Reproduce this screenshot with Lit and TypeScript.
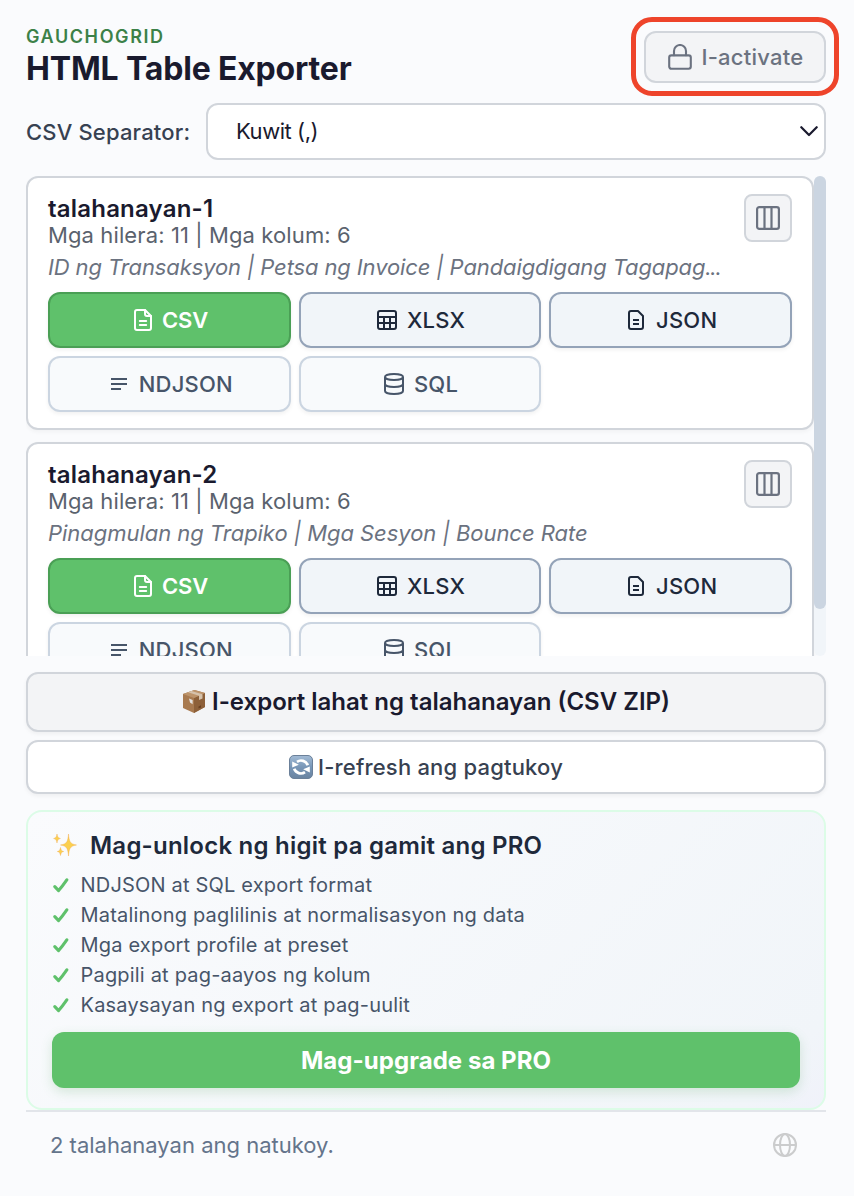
import { LitElement, html, css, nothing, type TemplateResult } from "lit";
import { customElement, property } from "lit/decorators.js";

const icons: Record<string, TemplateResult> = {
  lock: html`<svg width="24" height="26" viewBox="0 0 24 26" fill="none" stroke="currentColor" stroke-width="2.1" stroke-linecap="round" stroke-linejoin="round"><rect x="1.2" y="11.4" width="21.6" height="13.4" rx="2.2"/><path d="M6 11.2V7a6 6 0 0 1 12 0v4.2"/></svg>`,
  chevron: html`<svg width="18" height="11" viewBox="0 0 18 11" fill="none" stroke="currentColor" stroke-width="2.2" stroke-linecap="round" stroke-linejoin="round"><path d="M1.3 1.2 9 9l7.7-7.8"/></svg>`,
  columns: html`<svg width="24" height="24" viewBox="0 0 24 24" fill="none" stroke="currentColor" stroke-width="2.2"><rect x="1.1" y="1.1" width="21.8" height="21.8" rx="2.2"/><path d="M8.5 1v22M15.5 1v22"/></svg>`,
  csv: html`<svg width="18" height="22" viewBox="0 0 18 22" fill="none" stroke="currentColor" stroke-width="2" stroke-linecap="round" stroke-linejoin="round"><path d="M11 1H3a2 2 0 0 0-2 2v16a2 2 0 0 0 2 2h12a2 2 0 0 0 2-2V7z"/><path d="M11 1v4a2 2 0 0 0 2 2h4M5.8 12h6.4M5.8 16h6.4"/></svg>`,
  xlsx: html`<svg width="20" height="20" viewBox="0 0 20 20" fill="none" stroke="currentColor" stroke-width="2"><rect x="1" y="1" width="18" height="18" rx="2"/><path d="M1 7h18M1 13h18M7 7v12M13 7v12"/></svg>`,
  json: html`<svg width="16" height="20" viewBox="0 0 16 20" fill="none" stroke="currentColor" stroke-width="2" stroke-linejoin="round"><path d="M10 1H3a2 2 0 0 0-2 2v14a2 2 0 0 0 2 2h10a2 2 0 0 0 2-2V6z"/><path d="M5 10h6M5 14h6"/></svg>`,
  ndjson: html`<svg width="16" height="12" viewBox="0 0 16 12" fill="none" stroke="currentColor" stroke-width="2"><path d="M0 1h16M0 6h16M0 11h10"/></svg>`,
  sql: html`<svg width="20" height="22" viewBox="0 0 20 22" fill="none" stroke="currentColor" stroke-width="2"><ellipse cx="10" cy="4" rx="9" ry="3"/><path d="M1 4v14c0 1.7 4 3 9 3s9-1.3 9-3V4M1 11c0 1.7 4 3 9 3s9-1.3 9-3"/></svg>`,
  check: html`<svg width="16" height="15" viewBox="0 0 16 15" fill="none" stroke="currentColor" stroke-width="3.1" stroke-linecap="round" stroke-linejoin="round"><path d="M1.8 8.6 5.6 12.6Q9.5 8 13.8 1.8"/></svg>`,
  globe: html`<svg width="24" height="24" viewBox="0 0 24 24" fill="none" stroke="currentColor" stroke-width="2"><circle cx="12" cy="12" r="11"/><ellipse cx="12" cy="12" rx="5" ry="11"/><path d="M1 12h22"/></svg>`,
  box: html`<svg width="24" height="25" viewBox="0 0 24 25"><path d="M1 5 12.500 1 23 4v14L12 24 1 19z" fill="#a87a50"/><path d="M12 9 23 4v14L12 24z" fill="#8d6039"/><path d="M1 5 12.500 1 23 4 12 9z" fill="#bd946b"/><path d="m6 3.300 3.400-1.200L20.500 5.200v4.300L17 11V6.700z" fill="#d6c2ab"/><path d="m7 9.600 3.600 1.300v4.300L8 13.600z" fill="#e4e2df"/><path d="m16.500 17.500 2.500-1.200v2.100l-2.500 1.100z" fill="#6b4122"/></svg>`,
  refresh: html`<svg width="24" height="24" viewBox="0 0 24 24"><defs><linearGradient id="tile" x1="0" y1="0" x2="0" y2="1"><stop offset="0" stop-color="#a3bcd6"/><stop offset=".5" stop-color="#7896b7"/><stop offset="1" stop-color="#6983a0"/></linearGradient></defs><rect x=".5" y=".5" width="23" height="23" rx="4.500" fill="url(#tile)" stroke="#6b8099"/><g fill="none" stroke="#fff" stroke-width="2.700"><path d="M8 6.800A7.200 7.200 0 0 1 18.800 10.200"/><path d="M16 17.200A7.200 7.200 0 0 1 5.200 13.800"/></g><path d="M3.200 12.600V6.400l6.600 3.400zM20.800 11.400v6.200l-6.600-3.400z" fill="#fff"/></svg>`,
  sparkles: html`<svg width="25" height="24" viewBox="0 0 25 24" fill="#fbd04f" stroke="#f3a94c" stroke-width=".4"><path d="M15.5 1c.7 7.600 1.500 10 8 11-6.500 1-7.300 3.400-8 11-.7-7.600-1.500-10-8-11 6.500-1 7.300-3.400 8-11z"/><path d="M4 1c.4 2.700.9 3.800 3.400 4.500C4.900 6.200 4.400 7.300 4 10 3.600 7.300 3.100 6.200.6 5.500 3.100 4.800 3.600 3.700 4 1zM7.500 14.500c.4 2.400.9 3.400 3.200 4-2.300.6-2.800 1.600-3.200 4-.4-2.400-.9-3.400-3.200-4 2.300-.6 2.800-1.600 3.200-4z"/></svg>`,
};

interface TableInfo {
  name: string;
  meta: string;
  columns: string;
  truncated: boolean;
}

const base = css`
  * {
    box-sizing: border-box;
  }
  svg {
    display: block;
    flex: none;
  }
  button {
    margin: 0;
    font: inherit;
    display: flex;
    align-items: center;
    justify-content: center;
  }
`;

@customElement("table-card")
export class TableCard extends LitElement {
  @property({ attribute: false }) table!: TableInfo;

  static styles = [
    base,
    css`
      :host {
        display: block;
        height: 254px;
        flex: none;
        box-sizing: border-box;
        padding: 16px 20px;
        background: #fff;
        border: 2px solid #d1d5db;
        border-radius: 12px;
        box-shadow: 0 2px 4px rgba(0, 0, 0, 0.04);
      }
      .head {
        display: flex;
        justify-content: space-between;
        height: 57px;
      }
      .name {
        font-size: 24px;
        line-height: 29px;
        font-weight: 600;
        color: #1a1a2e;
        letter-spacing: 0.2px;
      }
      .meta {
        font-size: 22px;
        line-height: 24px;
        color: #5a626d;
        letter-spacing: 0.11px;
      }
      .cols {
        width: 48px;
        height: 48px;
        padding: 0;
        border: 2px solid #d1d5db;
        border-radius: 8px;
        background: #f3f4f6;
        color: #6b7280;
      }
      .preview {
        font-size: 22px;
        line-height: 32px;
        height: 41px;
        font-style: italic;
        color: #6b7280;
        white-space: nowrap;
        letter-spacing: -0.04px;
      }
      .long {
        letter-spacing: -0.12px;
      }
      .dots {
        letter-spacing: -1.3px;
      }
      .formats {
        display: grid;
        grid-template-columns: repeat(3, 1fr);
        grid-auto-rows: 56px;
        gap: 8px;
      }
      .fmt {
        gap: 10px;
        padding: 0 0 0 2px;
        border: 2px solid #94a3b8;
        border-radius: 12px;
        background: #f1f5f9;
        color: #1e293b;
        font-size: 22px;
        font-weight: 500;
        letter-spacing: 0.2px;
        box-shadow: 0 2px 4px rgba(0, 0, 0, 0.06);
      }
      .csv {
        background: #5fc16b;
        border-color: #4a9f55;
        color: #fff;
        font-weight: 600;
        letter-spacing: -0.2px;
        padding-left: 3px;
        gap: 10.5px;
      }
      .json,
      .ndjson {
        gap: 12px;
        padding-left: 4px;
      }
      .ndjson {
        padding-left: 5px;
      }
      .ndjson,
      .sql {
        background: #f8fafc;
        border-color: #cbd5e1;
        color: #475569;
      }
    `,
  ];

  render() {
    const { name, meta, columns, truncated } = this.table;
    return html`
      <div class="head">
        <div>
          <div class="name">${name}</div>
          <div class="meta">${meta}</div>
        </div>
        <button class="cols">${icons.columns}</button>
      </div>
      <div class="preview"><span class=${truncated ? "long" : "full"}>${columns}</span>${truncated ? html`<span class="dots">...</span>` : nothing}</div>
      <div class="formats">
        ${["CSV", "XLSX", "JSON", "NDJSON", "SQL"].map(
          (f) => html`<button class="fmt ${f.toLowerCase()}">${icons[f.toLowerCase()]}<span>${f}</span></button>`
        )}
      </div>
    `;
  }
}

@customElement("app-root")
export class AppRoot extends LitElement {
  static styles = [
    base,
    css`
      :host {
        display: flex;
        flex-direction: column;
        height: 1196px;
        box-sizing: border-box;
        padding: 0 28px 0 26px;
        background: #fafbfd;
        font-family: Inter, "Liberation Sans", sans-serif;
        overflow: hidden;
      }
      .header {
        display: flex;
        justify-content: space-between;
        height: 103px;
        padding-top: 26px;
      }
      .brand {
        font-size: 18px;
        line-height: 22px;
        font-weight: 600;
        color: #3c8148;
        letter-spacing: 1.6px;
      }
      .title {
        font-size: 32px;
        line-height: 42px;
        font-weight: 700;
        color: #1a1a2e;
        letter-spacing: -0.17px;
      }
      .activate-wrap {
        position: relative;
        margin-top: 5px;
        height: 52px;
      }
      .activate {
        width: 182px;
        height: 52px;
        padding: 0 0 0 2px;
        gap: 9px;
        border: 2px solid #d1d5db;
        border-radius: 12px;
        background: #f3f4f6;
        color: #6b7280;
        font-size: 22px;
        font-weight: 500;
        letter-spacing: 0.25px;
      }
      .ring {
        position: absolute;
        inset: -14px -13px -13px -13px;
        border: 5px solid #ee442b;
        border-radius: 21px;
      }
      .separator {
        display: flex;
        align-items: center;
        justify-content: space-between;
        height: 57px;
        margin-bottom: 16px;
        font-size: 22px;
        font-weight: 500;
        color: #374151;
      }
      .label {
        letter-spacing: 0.17px;
      }
      .select {
        display: flex;
        align-items: center;
        justify-content: space-between;
        width: 620px;
        height: 57px;
        padding: 0 6px 1px 28px;
        border: 2px solid #d1d5db;
        border-radius: 12px;
        background: #fff;
        color: #1a1a2e;
        font-weight: 400;
      }
      .kuwit {
        letter-spacing: -0.45px;
      }
      .scroll {
        display: flex;
        height: 480px;
        overflow: hidden;
        margin-bottom: 16px;
        flex: none;
      }
      .cards {
        flex: 1;
        display: flex;
        flex-direction: column;
        gap: 12px;
      }
      .track {
        width: 12px;
        background: #f1f5f9;
        border-radius: 6px;
      }
      .thumb {
        height: 433px;
        background: #cbd5e1;
        border-radius: 6px;
      }
      .wide {
        flex: none;
        gap: 6px;
        padding: 0;
        border: 2px solid #d1d5db;
        border-radius: 12px;
        box-shadow: 0 2px 4px rgba(0, 0, 0, 0.05);
      }
      .export {
        height: 60px;
        padding-bottom: 2px;
        background: #f3f4f6;
        color: #1a1a2e;
        font-size: 24px;
        font-weight: 600;
        margin-bottom: 8px;
      }
      .refresh {
        height: 54px;
        gap: 5px;
        background: #fff;
        color: #374151;
        font-size: 22px;
        font-weight: 500;
        letter-spacing: 0.2px;
        margin-bottom: 16px;
      }
      .promo {
        flex: none;
        height: 300px;
        padding: 16px 24px 20px;
        border: 2px solid #dcfce7;
        border-radius: 16px;
        background: linear-gradient(135deg, #fafbfd 0%, #f1f5f9 92%, #f0f2fa 100%);
      }
      .promo-title {
        display: flex;
        align-items: center;
        gap: 12px;
        height: 34px;
        padding-left: 1px;
        margin-bottom: 8px;
        font-size: 24px;
        font-weight: 600;
        color: #1e293b;
        letter-spacing: 0.23px;
      }
      .features {
        margin: 0;
        padding: 0;
        list-style: none;
        height: 162px;
      }
      .feature {
        display: flex;
        align-items: center;
        gap: 11.5px;
        height: 30px;
        padding-left: 1px;
        font-size: 20px;
        color: #475569;
        letter-spacing: 0.19px;
      }
      .tick {
        color: #5fc16b;
      }
      .upgrade {
        width: 100%;
        height: 56px;
        padding: 0;
        border: 0;
        border-radius: 12px;
        background: #5fc16b;
        color: #fff;
        font-size: 24px;
        font-weight: 700;
        letter-spacing: 0.05px;
        box-shadow: 0 4px 12px rgba(74, 159, 85, 0.2);
      }
      .footer {
        display: flex;
        flex: none;
        align-items: center;
        justify-content: space-between;
        height: 70px;
        padding: 0 29px 2px 24px;
        border-top: 2px solid #e2e5ea;
        font-size: 22px;
        color: #64748b;
      }
      .globe {
        color: #cbcccd;
      }
    `,
  ];

  private tables: TableInfo[] = [
    {
      name: "talahanayan-1",
      meta: "Mga hilera: 11 | Mga kolum: 6",
      columns: "ID ng Transaksyon | Petsa ng Invoice | Pandaigdigang Tagapag",
      truncated: true,
    },
    {
      name: "talahanayan-2",
      meta: "Mga hilera: 11 | Mga kolum: 6",
      columns: "Pinagmulan ng Trapiko | Mga Sesyon | Bounce Rate",
      truncated: false,
    },
  ];

  private features = [
    "NDJSON at SQL export format",
    "Matalinong paglilinis at normalisasyon ng data",
    "Mga export profile at preset",
    "Pagpili at pag-aayos ng kolum",
    "Kasaysayan ng export at pag-uulit",
  ];

  render() {
    return html`
      <div class="header">
        <div>
          <div class="brand">GAUCHOGRID</div>
          <div class="title">HTML Table Exporter</div>
        </div>
        <div class="activate-wrap">
          <button class="activate">${icons.lock}<span>I-activate</span></button>
          <div class="ring"></div>
        </div>
      </div>
      <div class="separator">
        <span class="label">CSV Separator:</span>
        <div class="select"><span class="kuwit">Kuwit (,)</span>${icons.chevron}</div>
      </div>
      <div class="scroll">
        <div class="cards">${this.tables.map((t) => html`<table-card .table=${t}></table-card>`)}</div>
        <div class="track"><div class="thumb"></div></div>
      </div>
      <button class="wide export">${icons.box}<span>I-export lahat ng talahanayan (CSV ZIP)</span></button>
      <button class="wide refresh">${icons.refresh}<span>I-refresh ang pagtukoy</span></button>
      <div class="promo">
        <div class="promo-title">${icons.sparkles}<span>Mag-unlock ng higit pa gamit ang PRO</span></div>
        <ul class="features">
          ${this.features.map((f) => html`<li class="feature"><span class="tick">${icons.check}</span><span>${f}</span></li>`)}
        </ul>
        <button class="upgrade">Mag-upgrade sa PRO</button>
      </div>
      <div class="footer">
        <span class="status">2 talahanayan ang natukoy.</span>
        <span class="globe">${icons.globe}</span>
      </div>
    `;
  }
}
